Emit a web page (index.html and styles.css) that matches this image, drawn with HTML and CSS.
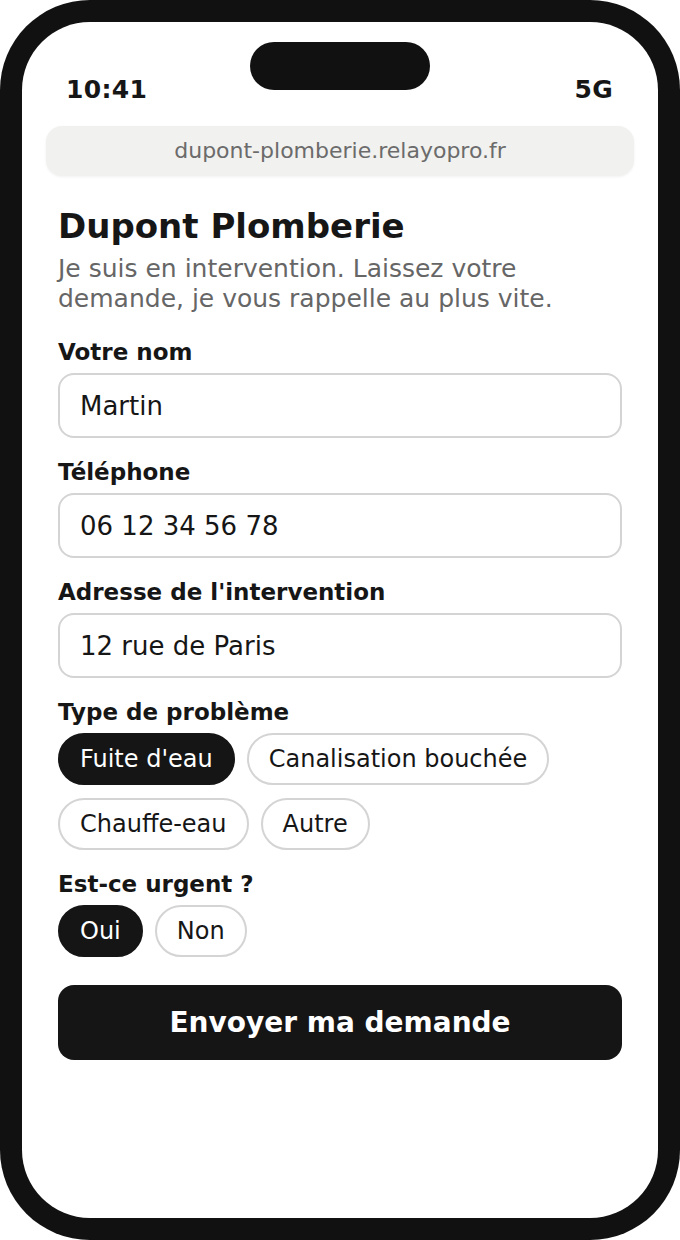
FILE: index.html
```html
<!DOCTYPE html>
<html lang="fr">
<head>
  <meta charset="utf-8">
  <title>Dupont Plomberie</title>
  <link rel="stylesheet" href="styles.css">
</head>
<body>
  <div class="phone">
    <div class="screen">
      <div class="island"></div>
      <div class="status">
        <span>10:41</span>
        <span>5G</span>
      </div>
      <div class="url">dupont-plomberie.relayopro.fr</div>
      <main class="page">
        <h1 class="title">Dupont Plomberie</h1>
        <p class="intro">Je suis en intervention. Laissez votre demande, je vous rappelle au plus vite.</p>
        <form class="form">
          <div class="field">
            <label class="label" for="nom">Votre nom</label>
            <input class="input" id="nom" type="text" value="Martin">
          </div>
          <div class="field">
            <label class="label" for="tel">Téléphone</label>
            <input class="input" id="tel" type="text" value="06 12 34 56 78">
          </div>
          <div class="field">
            <label class="label" for="adresse">Adresse de l'intervention</label>
            <input class="input" id="adresse" type="text" value="12 rue de Paris">
          </div>
          <div class="field">
            <span class="label">Type de problème</span>
            <div class="chips">
              <button type="button" class="chip active">Fuite d'eau</button>
              <button type="button" class="chip">Canalisation bouchée</button>
              <button type="button" class="chip">Chauffe-eau</button>
              <button type="button" class="chip">Autre</button>
            </div>
          </div>
          <div class="field">
            <span class="label">Est-ce urgent ?</span>
            <div class="chips">
              <button type="button" class="chip active">Oui</button>
              <button type="button" class="chip">Non</button>
            </div>
          </div>
          <button type="submit" class="submit">Envoyer ma demande</button>
        </form>
      </main>
    </div>
  </div>
</body>
</html>
```

FILE: styles.css
```css
* {
  margin: 0;
  padding: 0;
  box-sizing: border-box;
}
body {
  background-color: #ffffff;
  font-family: 'DejaVu Sans', sans-serif;
  color: #161616;
}
.phone {
  width: 680px;
  height: 1240px;
  padding: 22px;
  background-color: #111111;
  border-radius: 90px;
}
.screen {
  position: relative;
  height: 100%;
  background-color: #ffffff;
  border-radius: 68px;
  overflow: hidden;
}
.island {
  position: absolute;
  top: 20px;
  left: 228px;
  width: 180px;
  height: 48px;
  background-color: #111111;
  border-radius: 24px;
}
.status {
  display: flex;
  justify-content: space-between;
  padding: 53px 45px 0 44px;
  font-size: 25px;
  line-height: 30px;
  font-weight: bold;
  letter-spacing: 0.3px;
  color: #161616;
}
.url {
  margin: 21px 24px 0;
  height: 50px;
  line-height: 50px;
  text-align: center;
  font-size: 22px;
  color: #6b6b6b;
  background-color: #f1f1ef;
  border-radius: 16px;
  box-shadow: 0 1px 3px rgba(0, 0, 0, 0.06);
}
.page {
  padding: 30px 36px 0;
}
.title {
  font-size: 34px;
  line-height: 40px;
  font-weight: bold;
  color: #161616;
}
.intro {
  margin-top: 8px;
  font-size: 25px;
  line-height: 30px;
  color: #666666;
}
.form {
  display: flex;
  flex-direction: column;
  gap: 21px;
  margin-top: 25px;
}
.field {
  display: flex;
  flex-direction: column;
  gap: 8px;
}
.label {
  font-size: 23px;
  line-height: 26px;
  font-weight: bold;
  color: #161616;
}
.input {
  width: 100%;
  height: 65px;
  padding: 0 20px;
  font-family: inherit;
  font-size: 26px;
  color: #161616;
  background-color: #ffffff;
  border: 2px solid #d4d4d4;
  border-radius: 16px;
  outline: none;
}
.chips {
  display: flex;
  flex-wrap: wrap;
  gap: 13px 12px;
}
.chip {
  padding: 10px 20px;
  font-family: inherit;
  font-size: 24px;
  line-height: 28px;
  color: #161616;
  background-color: #ffffff;
  border: 2px solid #d4d4d4;
  border-radius: 999px;
  cursor: pointer;
}
.chip.active {
  color: #ffffff;
  background-color: #151515;
  border-color: #151515;
}
.submit {
  margin-top: 7px;
  width: 100%;
  padding: 21px 0;
  font-family: inherit;
  font-size: 28px;
  line-height: 33px;
  font-weight: bold;
  color: #ffffff;
  background-color: #151515;
  border: none;
  border-radius: 16px;
  cursor: pointer;
}
```
